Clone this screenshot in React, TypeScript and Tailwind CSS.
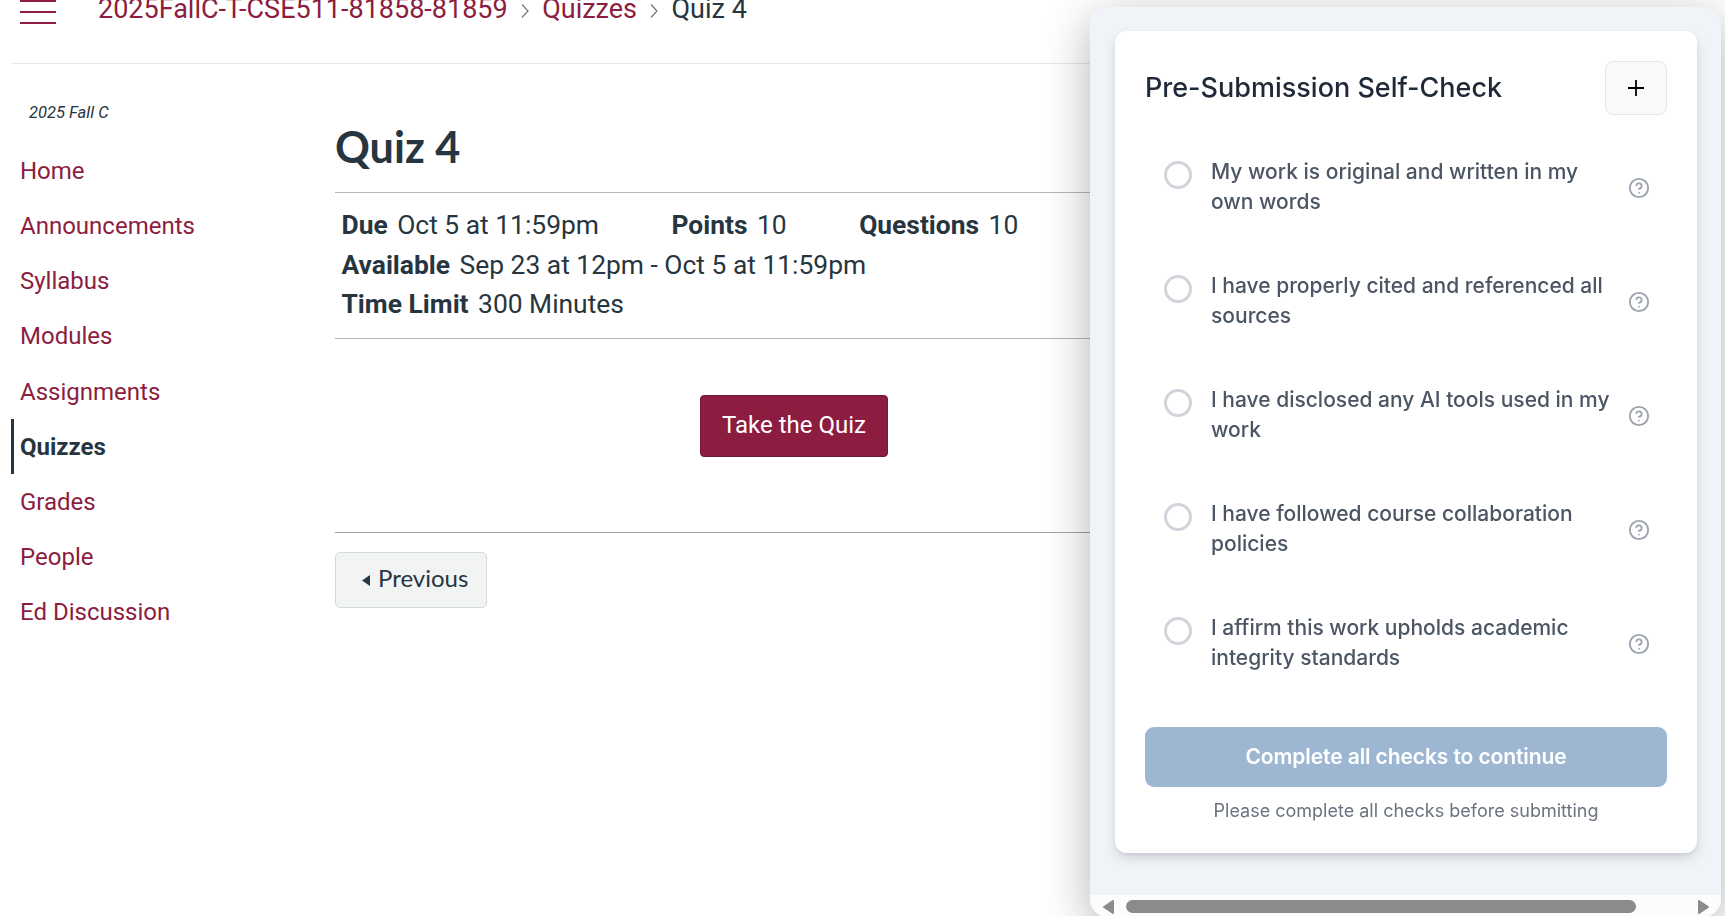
import { CircleHelp } from 'lucide-react'

const navItems = ['Home', 'Announcements', 'Syllabus', 'Modules', 'Assignments', 'Quizzes', 'Grades', 'People', 'Ed Discussion']

const checks = [
  'My work is original and written in my own words',
  'I have properly cited and referenced all sources',
  'I have disclosed any AI tools used in my work',
  'I have followed course collaboration policies',
  'I affirm this work upholds academic integrity standards'
]

function Crumb() {
  return (
    <svg width="9" height="16" viewBox="0 0 9 16" fill="none" stroke="#6b7780" strokeWidth="1.2" className="mt-1">
      <path d="M1 1.5l6 6.5L1 14.5" />
    </svg>
  )
}

function Header() {
  return (
    <header className="ml-[11px] mr-[5px] h-16 border-b border-[#e6e7e8] flex items-start shrink-0">
      <div className="ml-[9px] w-9 flex flex-col gap-[9px]">
        <div className="h-[2px] bg-[#8c1d40]" />
        <div className="h-[2px] bg-[#8c1d40]" />
        <div className="h-[2px] bg-[#8c1d40]" />
      </div>
      <nav className="ml-[42px] -mt-[11px] flex items-center text-[27px] leading-10 text-[#8c1d40] whitespace-nowrap">
        <span>2025FallC-T-CSE511-81858-81859</span>
        <span className="ml-[13px] mr-[12.5px]"><Crumb /></span>
        <span>Quizzes</span>
        <span className="ml-[13px] mr-[12.5px]"><Crumb /></span>
        <span className="text-[#273540]">Quiz 4</span>
      </nav>
    </header>
  )
}

function Sidebar() {
  return (
    <aside className="w-[324px] shrink-0 ml-[11px] pt-[37px]">
      <div className="pl-[18px] h-[42.5px] text-[16.5px] leading-6 italic text-[#273540]">2025 Fall C</div>
      <ul>
        {navItems.map((item) => (
          <li
            key={item}
            className={
              item === 'Quizzes'
                ? 'h-[55.15px] flex items-center text-2xl border-l-[3px] border-[#273540] pl-1.5 font-bold text-[#273540]'
                : 'h-[55.15px] flex items-center text-2xl border-l-[3px] border-transparent pl-1.5 text-[#8c1d40]'
            }
          >
            {item}
          </li>
        ))}
      </ul>
    </aside>
  )
}

function Detail({ label, value }: { label: string; value: string }) {
  return (
    <div className="flex gap-[9.5px]">
      <span className="font-bold">{label}</span>
      <span>{value}</span>
    </div>
  )
}

function QuizPage() {
  return (
    <main className="flex-1 mr-[5px] text-[#273540]">
      <h1 className="mt-[52px] mb-[15px] h-[61px] leading-[61px] text-[43.2px] font-bold font-[Lato,sans-serif]">Quiz 4</h1>
      <div className="h-[147px] border-y border-[#b5b7b9] pl-[6.5px] pt-[13px] text-[26.4px] leading-[39.6px]">
        <div className="flex gap-[72.5px]">
          <Detail label="Due" value="Oct 5 at 11:59pm" />
          <Detail label="Points" value="10" />
          <Detail label="Questions" value="10" />
        </div>
        <Detail label="Available" value="Sep 23 at 12pm - Oct 5 at 11:59pm" />
        <Detail label="Time Limit" value="300 Minutes" />
      </div>
      <button className="mt-14 ml-[365px] w-[188px] h-[62px] rounded-[4px] border border-[#76173a] bg-[#8c1d40] text-white text-2xl pb-0.5 block">
        Take the Quiz
      </button>
      <div className="mt-[75px] border-t border-[#a0a2a4] pt-[19px]">
        <button className="w-[152px] h-14 rounded-[5px] border border-[#d5d9dc] bg-[#f2f4f4] flex items-center pl-[26px] pb-1 gap-2 text-2xl font-[Lato,sans-serif]">
          <svg width="8" height="11" viewBox="0 0 8 11" className="mt-1">
            <path d="M8 0v11L0 5.5z" fill="#273540" />
          </svg>
          Previous
        </button>
      </div>
    </main>
  )
}

function CheckRow({ text }: { text: string }) {
  return (
    <li className="h-[114px] pt-[25px] flex items-start">
      <span className="mt-1 w-7 h-7 rounded-full border-[3px] border-[#d1d5db] shrink-0" />
      <span className="ml-[19px] w-[412px] text-[21px] leading-[30px] font-medium text-[#4b5563]">{text}</span>
      <CircleHelp className="ml-[4.5px] mt-[20px] w-[22px] h-[22px] text-[#9ca3af] shrink-0" strokeWidth={2} />
    </li>
  )
}

function SelfCheckPanel() {
  return (
    <section className="fixed left-[1090px] top-[7px] w-[631px] h-[910px] rounded-[18px] overflow-hidden bg-[#f0f4f9] shadow-[0_12px_48px_rgba(0,0,0,0.3)] flex flex-col font-[Inter,sans-serif]">
      <div className="mt-6 mx-[25px] w-[582px] h-[822px] rounded-xl bg-white px-[30px] pt-[30px] shadow-[0_6px_14px_-1px_rgba(0,0,0,0.13),0_3px_6px_-2px_rgba(0,0,0,0.1)]">
        <div className="flex items-center justify-between">
          <h2 className="text-[27px] font-medium text-[#1f2937]">Pre-Submission Self-Check</h2>
          <button className="w-[62px] h-[54px] rounded-lg border border-[#e5e7eb] bg-[#f9fafb] flex items-center justify-center">
            <svg width="16" height="16" viewBox="0 0 16 16" stroke="#000" strokeWidth="1.8">
              <path d="M8 0v16M0 8h16" />
            </svg>
          </button>
        </div>
        <ul className="mt-[17px] pl-[19px]">
          {checks.map((text) => (
            <CheckRow key={text} text={text} />
          ))}
        </ul>
        <button className="mt-[25px] w-full h-[60px] rounded-[9px] bg-[#9db7d3] text-white text-[21px] tracking-[-0.1px] font-semibold block">
          Complete all checks to continue
        </button>
        <p className="mt-[10px] text-center text-[18px] leading-[27px] text-[#6b7280]">Please complete all checks before submitting</p>
      </div>
      <div className="mt-auto h-[22px] bg-[#fcfcfc] flex items-center shrink-0">
        <svg width="11" height="14" viewBox="0 0 11 14" className="ml-[13px] mt-[2px]">
          <path d="M10 1v12L1 7z" fill="#8b8b8b" stroke="#8b8b8b" strokeWidth="2" strokeLinejoin="round" />
        </svg>
        <div className="ml-3 w-[510px] h-[13px] rounded-full bg-[#8b8b8b]" />
        <svg width="11" height="14" viewBox="0 0 11 14" className="ml-[62px] mt-[2px]">
          <path d="M1 1v12l9-6z" fill="#8b8b8b" stroke="#8b8b8b" strokeWidth="2" strokeLinejoin="round" />
        </svg>
      </div>
    </section>
  )
}

export default function App() {
  return (
    <div className="h-screen overflow-hidden bg-white flex flex-col font-[Roboto,sans-serif]">
      <Header />
      <div className="flex flex-1">
        <Sidebar />
        <QuizPage />
      </div>
      <SelfCheckPanel />
    </div>
  )
}
